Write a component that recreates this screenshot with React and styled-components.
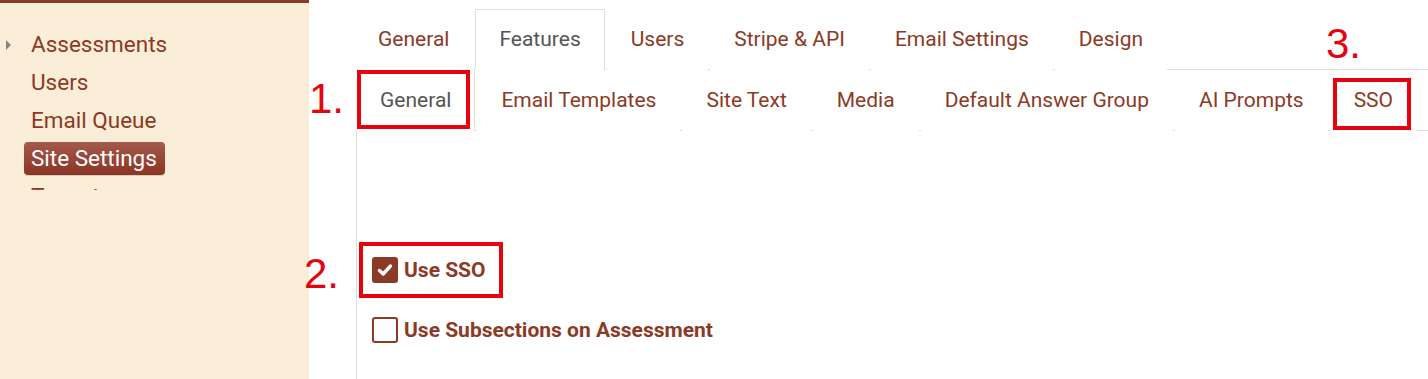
import styled, { createGlobalStyle } from 'styled-components'

const GlobalStyle = createGlobalStyle`
  html, body {
    margin: 0;
    padding: 0;
    background: #ffffff;
  }
  body {
    font-family: Roboto, "Liberation Sans", sans-serif;
  }
`

const brown = '#8b3a25'
const line = '#dddddd'

const Page = styled.div`
  position: relative;
  display: flex;
  min-height: 100vh;
  overflow: hidden;
`

const Sidebar = styled.aside`
  width: 309px;
  flex-shrink: 0;
  background: #fbeed9;
  border-top: 3px solid ${brown};
`

const Menu = styled.ul`
  list-style: none;
  margin: 0;
  padding: 25px 0 0 6px;
  height: 162px;
  overflow: hidden;
  display: flex;
  flex-direction: column;
  gap: 5px;
`

const MenuRow = styled.li`
  display: flex;
  align-items: center;
  height: 33px;
  flex-shrink: 0;
`

const CaretSlot = styled.span`
  width: 18px;
  display: flex;
  align-items: center;
`

const Caret = styled.span`
  width: 0;
  height: 0;
  border-left: 5px solid #8a8580;
  border-top: 5px solid transparent;
  border-bottom: 5px solid transparent;
`

const MenuItem = styled.a`
  display: block;
  padding: 0 8px 0 7px;
  height: 33px;
  line-height: 33px;
  font-size: 22.5px;
  white-space: nowrap;
  border-radius: 4px;
  color: ${(p) => (p.$active ? '#ffffff' : brown)};
  background: ${(p) =>
    p.$active ? 'linear-gradient(#a45a4b, #8a3425)' : 'transparent'};
  box-shadow: ${(p) => (p.$active ? '0 1px 1px rgba(0,0,0,0.15)' : 'none')};
`

const Main = styled.main`
  flex: 1;
  min-width: 0;
  display: flex;
  flex-direction: column;
  padding: 9px 0 0 47px;
`

const TopNav = styled.ul`
  list-style: none;
  margin: 0 0 0 -2px;
  padding: 0;
  display: flex;
  border-bottom: 1px solid ${line};
`

const SubNav = styled.ul`
  list-style: none;
  margin: 0;
  padding: 0;
  display: flex;
  border-bottom: 1px solid ${line};
`

const Tab = styled.li`
  flex-shrink: 0;
  white-space: nowrap;
  height: 59px;
  line-height: 59px;
  padding: 0 23px;
  margin-right: 2px;
  margin-bottom: -1px;
  font-size: 21px;
  border: 1px solid transparent;
  color: ${(p) => (p.$active ? '#555555' : brown)};
  background: #ffffff;
  ${(p) =>
    p.$active &&
    `
    border-color: ${line};
    border-bottom-color: #ffffff;
  `}
`

const SubTab = styled(Tab)`
  ${(p) =>
    p.$active &&
    `
    border-top-color: transparent;
    border-left-color: transparent;
    margin-left: -1px;
  `}
`

const Panel = styled.section`
  flex: 1;
  display: flex;
  flex-direction: column;
  border-left: 1px solid ${line};
`

const Fields = styled.div`
  display: flex;
  flex-direction: column;
  gap: 34px;
  padding: 126px 0 0 15px;
`

const CheckRow = styled.label`
  display: flex;
  align-items: center;
  gap: 6px;
  height: 26px;
  font-size: 21px;
  font-weight: 700;
  color: ${brown};
`

const Box = styled.span`
  width: 26px;
  height: 26px;
  box-sizing: border-box;
  border-radius: 3px;
  border: 2px solid ${brown};
  background: ${(p) => (p.$checked ? brown : '#ffffff')};
  display: flex;
  align-items: center;
  justify-content: center;
`

const Mark = styled.div`
  position: absolute;
  left: ${(p) => p.$x}px;
  top: ${(p) => p.$y}px;
  width: ${(p) => p.$w}px;
  height: ${(p) => p.$h}px;
  box-sizing: border-box;
  border: 4px solid #e5040e;
  pointer-events: none;
`

const Number = styled.div`
  position: absolute;
  left: ${(p) => p.$x}px;
  top: ${(p) => p.$y}px;
  font-family: "Liberation Sans", Arial, sans-serif;
  font-size: 42px;
  line-height: 1;
  color: #e5040e;
  pointer-events: none;
`

const Checkbox = ({ checked, children }) => (
  <CheckRow>
    <Box $checked={checked}>
      {checked && (
        <svg width="18" height="18" viewBox="0 0 18 18">
          <polyline
            points="3.5,9.5 7.2,13 14.5,5"
            fill="none"
            stroke="#ffffff"
            strokeWidth="3.4"
            strokeLinecap="round"
            strokeLinejoin="round"
          />
        </svg>
      )}
    </Box>
    {children}
  </CheckRow>
)

const menu = [
  { label: 'Assessments', caret: true },
  { label: 'Users' },
  { label: 'Email Queue' },
  { label: 'Site Settings', active: true },
  { label: 'Tenants' },
]

const topTabs = ['General', 'Features', 'Users', 'Stripe & API', 'Email Settings', 'Design']
const subTabs = [
  'General',
  'Email Templates',
  'Site Text',
  'Media',
  'Default Answer Group',
  'AI Prompts',
  'SSO',
]

export default function App() {
  return (
    <>
      <GlobalStyle />
      <Page>
        <Sidebar>
          <Menu>
            {menu.map((item) => (
              <MenuRow key={item.label}>
                <CaretSlot>{item.caret && <Caret />}</CaretSlot>
                <MenuItem $active={item.active}>{item.label}</MenuItem>
              </MenuRow>
            ))}
          </Menu>
        </Sidebar>
        <Main>
          <TopNav>
            {topTabs.map((t) => (
              <Tab key={t} $active={t === 'Features'}>
                {t}
              </Tab>
            ))}
          </TopNav>
          <Panel>
            <SubNav>
              {subTabs.map((t, i) => (
                <SubTab key={t} $active={i === 0}>
                  {t}
                </SubTab>
              ))}
            </SubNav>
            <Fields>
              <Checkbox checked>Use SSO</Checkbox>
              <Checkbox>Use Subsections on Assessment</Checkbox>
            </Fields>
          </Panel>
        </Main>

        <Number $x={309} $y={78}>1.</Number>
        <Number $x={304} $y={253}>2.</Number>
        <Number $x={1326} $y={23}>3.</Number>
        <Mark $x={357} $y={70} $w={113} $h={59} />
        <Mark $x={359} $y={242} $w={144} $h={56} />
        <Mark $x={1333} $y={78} $w={78} $h={52} />
      </Page>
    </>
  )
}
